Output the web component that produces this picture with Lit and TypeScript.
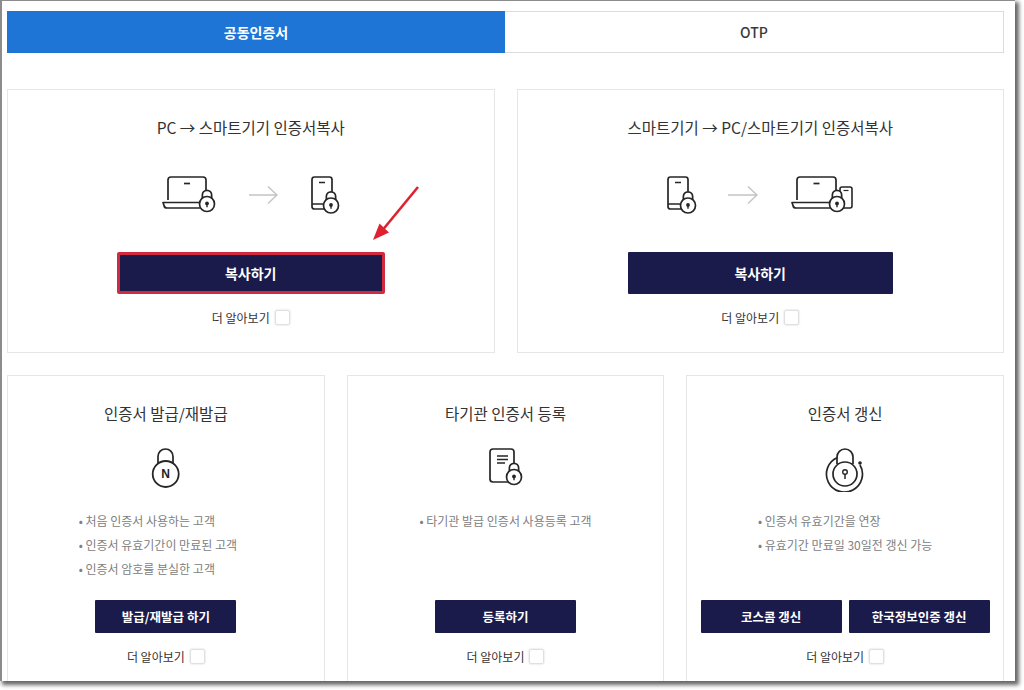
import { LitElement, html, css, svg } from "lit";
import { customElement } from "lit/decorators.js";

const STROKE = "#262626";

const lock = (cx: number, cy: number, r: number) => svg`
  <path d="M${cx - r * 0.62} ${cy - r * 0.6}v${-r * 0.6}a${r * 0.62} ${r * 0.62} 0 0 1 ${r * 1.24} 0v${r * 0.6}" fill="#fff" stroke=${STROKE} stroke-width="1.7"/>
  <circle cx=${cx} cy=${cy} r=${r} fill="#fff" stroke=${STROKE} stroke-width="1.7"/>
  <circle cx=${cx} cy=${cy - 0.6} r="1.9" fill=${STROKE}/>
  <path d="M${cx} ${cy}v3.200" stroke=${STROKE} stroke-width="1.4"/>`;

const laptop = (x: number, w: number, baseX: number, baseW: number) => svg`
  <path d="M${x} 200v-20a3 3 0 0 1 3-3h${w - 6}a3 3 0 0 1 3 3v20" fill="none" stroke=${STROKE} stroke-width="1.7"/>
  <path d="M${baseX} 202.500h${baseW}l-1 3a3 3 0 0 1-3 2.500h${-baseW + 8}a3 3 0 0 1-3-2.500z" fill="#fff" stroke=${STROKE} stroke-width="1.7" stroke-linejoin="round"/>
  <path d="M${x + w / 2 - 3} 183.500h6" stroke=${STROKE} stroke-width="1.7"/>`;

const phone = (x: number) => svg`
  <rect x=${x} y="177" width="20" height="32" rx="2.500" fill="#fff" stroke=${STROKE} stroke-width="1.7"/>
  <path d="M${x} 204h20M${x + 7} 182.500h6" stroke=${STROKE} stroke-width="1.7"/>`;

const arrow = (x1: number, x2: number) => svg`
  <path d="M${x1} 195h${x2 - x1}M${x2 - 9} 186.500l9 8.500-9 8.500" fill="none" stroke="#c4c4c4" stroke-width="1.4"/>`;

const iconA = svg`${laptop(168, 38, 163, 50)}${lock(207, 204, 7.5)}${arrow(249, 277)}${phone(312)}${lock(331, 205.5, 7.5)}`;

const iconB = svg`${phone(668)}${lock(688, 205.5, 7.5)}${arrow(728, 757)}${laptop(797, 39, 792, 54)}
  <rect x="840" y="187" width="12" height="21" rx="2" fill="#fff" stroke=${STROKE} stroke-width="1.6"/>
  <path d="M843.500 190.500h5" stroke=${STROKE} stroke-width="1.2"/>
  ${lock(837, 204, 7.5)}`;

const iconN = svg`
  <path d="M158 463v-6.500a7.500 7.500 0 0 1 15 0V463" fill="none" stroke=${STROKE} stroke-width="1.7"/>
  <circle cx="165.700" cy="474" r="13" fill="#fff" stroke=${STROKE} stroke-width="1.8"/>
  <text x="165.700" y="478.300" text-anchor="middle" class="n">N</text>`;

const iconDoc = svg`
  <path d="M508 482h-15a3 3 0 0 1-3-3v-27a3 3 0 0 1 3-3h18a3 3 0 0 1 3 3v13" fill="none" stroke=${STROKE} stroke-width="1.7"/>
  <path d="M497 456h11M497 459.500h11M497 463h8" stroke=${STROKE} stroke-width="1.4"/>
  ${lock(514, 477, 7.5)}`;

const iconRenew = svg`
  <path d="M837 464v-7a8 8 0 0 1 16 0v7" fill="none" stroke=${STROKE} stroke-width="1.7"/>
  <circle cx="845" cy="474" r="12" fill="#fff" stroke=${STROKE} stroke-width="1.7"/>
  <path d="M860 465a18 18 0 1 1-22.500-7.500" fill="none" stroke=${STROKE} stroke-width="1.7"/>
  <circle cx="860" cy="463" r="1.800" fill=${STROKE}/>
  <circle cx="845" cy="472" r="2.300" fill="none" stroke=${STROKE} stroke-width="1.4"/>
  <path d="M845 474v5" stroke=${STROKE} stroke-width="1.5"/>`;

@customElement("app-root")
export class AppRoot extends LitElement {
  static styles = css`
    :host {
      display: block;
      width: 1024px;
      height: 690px;
      background: #fff;
      overflow: hidden;
      position: relative;
      font-family: "Noto Sans CJK KR", "Noto Sans", sans-serif;
      color: #333;
    }
    .sheet {
      box-sizing: border-box;
      width: 1015px;
      height: 681px;
      background: #fff;
      border-top: 1px solid #8c8c8c;
      border-left: 2px solid #8c8c8c;
      box-shadow: 3px 3px 4px 1px rgba(0, 0, 0, 0.6);
      padding: 10px 11px 0 5px;
      overflow: hidden;
      display: flex;
      flex-direction: column;
    }
    .tabs {
      display: flex;
      height: 42px;
      flex: none;
    }
    .tab {
      flex: 1 1 0;
      display: flex;
      align-items: center;
      justify-content: center;
      font-size: 14px;
      font-weight: 500;
      color: #3a3a3a;
      border: 1px solid #dcdcdc;
      border-left: 0;
      box-sizing: border-box;
    }
    .tab.on {
      flex: 0 0 498px;
      background: #1e75d6;
      color: #fff;
      border: 0;
      font-weight: 700;
    }
    .row {
      display: flex;
      gap: 22px;
      flex: none;
    }
    .top {
      margin-top: 36px;
      height: 264px;
    }
    .bottom {
      margin-top: 22px;
      height: 330px;
    }
    .card {
      box-sizing: border-box;
      flex: 1 1 0;
      min-width: 0;
      border: 1px solid #e6e6e6;
      padding-top: 25px;
      display: flex;
      flex-direction: column;
      align-items: center;
    }
    .title {
      font-size: 15.5px;
      line-height: 24px;
      color: #333;
      white-space: nowrap;
    }
    .row-icon {
      display: block;
      margin-top: 33px;
      width: 190px;
      height: 44px;
    }
    .big {
      margin-top: 36px;
      width: 265px;
      height: 42px;
      font-size: 14px;
    }
    .btn {
      box-sizing: border-box;
      display: flex;
      align-items: center;
      justify-content: center;
      background: #1a1a4b;
      color: #fff;
      font-weight: 700;
      border-radius: 1px;
    }
    .alert {
      width: 268px;
      border: 3px solid #cf2a3e;
      border-radius: 2px;
    }
    .small {
      height: 33px;
      width: 141px;
      font-size: 12.5px;
    }
    .btns {
      display: flex;
      gap: 7px;
      margin-top: 19px;
    }
    .more {
      margin-top: 13px;
      height: 20px;
      display: flex;
      align-items: center;
      gap: 5px;
      font-size: 12px;
      color: #333;
    }
    .box {
      width: 13px;
      height: 13px;
      border: 1px solid #e0e0e0;
      border-radius: 2px;
      box-shadow: 0 0 2px #ccc;
    }
    .one-icon {
      display: block;
      margin-top: 20px;
      width: 60px;
      height: 47px;
    }
    .n {
      font: 700 12px "Liberation Sans", sans-serif;
      fill: #222;
    }
    ul {
      list-style: none;
      margin: 17px 0 0;
      padding: 0;
      height: 72px;
      font-size: 12px;
      line-height: 24px;
      color: #808080;
      white-space: nowrap;
    }
    .shift {
      transform: translateX(-8px);
    }
    .pointer {
      position: absolute;
      left: 365px;
      top: 180px;
      width: 60px;
      height: 66px;
    }
  `;

  private more() {
    return html`<div class="more"><span>더 알아보기</span><span class="box"></span></div>`;
  }

  render() {
    return html`
      <div class="sheet">
        <div class="tabs">
          <div class="tab on">공동인증서</div>
          <div class="tab">OTP</div>
        </div>
        <div class="row top">
          <section class="card">
            <div class="title">PC → 스마트기기 인증서복사</div>
            <svg class="row-icon" viewBox="156 172 190 44">${iconA}</svg>
            <div class="btn big alert">복사하기</div>
            ${this.more()}
          </section>
          <section class="card">
            <div class="title">스마트기기 → PC/스마트기기 인증서복사</div>
            <svg class="row-icon" viewBox="665 172 190 44">${iconB}</svg>
            <div class="btn big">복사하기</div>
            ${this.more()}
          </section>
        </div>
        <div class="row bottom">
          <section class="card">
            <div class="title">인증서 발급/재발급</div>
            <svg class="one-icon" viewBox="136 445 60 47">${iconN}</svg>
            <ul class="shift">
              <li>• 처음 인증서 사용하는 고객</li>
              <li>• 인증서 유효기간이 만료된 고객</li>
              <li>• 인증서 암호를 분실한 고객</li>
            </ul>
            <div class="btns"><div class="btn small">발급/재발급 하기</div></div>
            ${this.more()}
          </section>
          <section class="card">
            <div class="title">타기관 인증서 등록</div>
            <svg class="one-icon" viewBox="476 445 60 47">${iconDoc}</svg>
            <ul><li>• 타기관 발급 인증서 사용등록 고객</li></ul>
            <div class="btns"><div class="btn small">등록하기</div></div>
            ${this.more()}
          </section>
          <section class="card">
            <div class="title">인증서 갱신</div>
            <svg class="one-icon" viewBox="815 445 60 47">${iconRenew}</svg>
            <ul>
              <li>• 인증서 유효기간을 연장</li>
              <li>• 유효기간 만료일 30일전 갱신 가능</li>
            </ul>
            <div class="btns">
              <div class="btn small">코스콤 갱신</div>
              <div class="btn small">한국정보인증 갱신</div>
            </div>
            ${this.more()}
          </section>
        </div>
      </div>
      <svg class="pointer" viewBox="365 180 60 66">
        <path d="M418 187L381 232" stroke="#dd2230" stroke-width="2.600" fill="none"/>
        <path d="M373 240l6.500-16.500 9.500 9z" fill="#dd2230"/>
      </svg>
    `;
  }
}
